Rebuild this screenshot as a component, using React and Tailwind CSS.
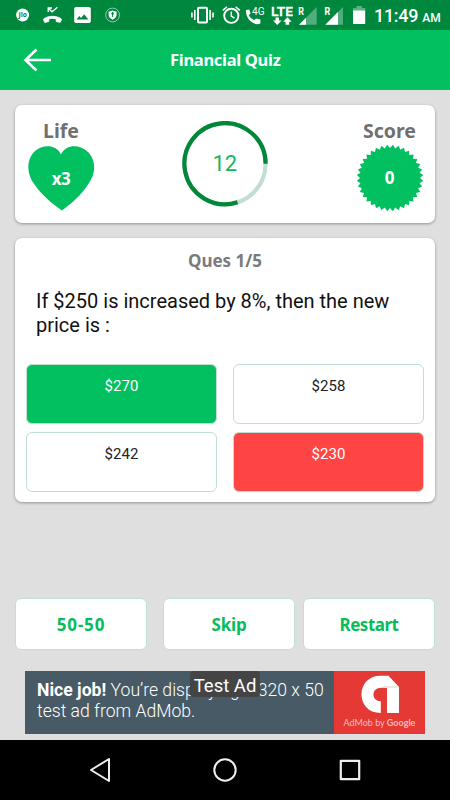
import React from 'react';

const HEADING = "font-['Noto_Sans','Open_Sans',sans-serif] font-bold";

const seal = Array.from({ length: 72 }, (_, i) => {
  const a = (i * Math.PI) / 36 - Math.PI / 2;
  const r = i % 2 ? 33.3 : 30;
  return `${(34 + r * Math.cos(a)).toFixed(2)},${(34 + r * Math.sin(a)).toFixed(2)}`;
}).join(' ');

function StatusBar() {
  return (
    <div className="flex h-[30px] items-start bg-[#00873e] text-white">
      <svg className="ml-4 h-[30px] w-[14px]" viewBox="16 0 14 30">
        <circle cx="22.6" cy="15" r="6.5" fill="white" />
        <text x="22.6" y="17.3" textAnchor="middle" fontSize="6.6" fontWeight="700" fill="#00873e" fontFamily="Open Sans, sans-serif">Jio</text>
      </svg>
      <svg className="ml-3 h-[30px] w-5" viewBox="42 0 20 30">
        <path d="M43.3 19.3C47.5 15.3 57.5 15.3 61.7 19.3L60.2 22.4L56.2 21.5V18.9C54 18.2 51 18.2 48.8 18.9V21.5L44.8 22.6Z" fill="white" stroke="white" strokeWidth=".8" strokeLinejoin="round" />
        <path d="M48.2 12V8H52M48.5 8.2L52 11.8L57.4 7.2" fill="none" stroke="white" strokeWidth="1.3" />
      </svg>
      <svg className="ml-3 h-[30px] w-[17px]" viewBox="74 0 17 30">
        <rect x="74.2" y="7" width="16.6" height="16" rx="1.8" fill="white" />
        <path d="M76.5 19.5L79.3 16L81.1 18L84.2 14.3L88.3 19.5Z" fill="#00873e" />
      </svg>
      <svg className="ml-3.5 h-[30px] w-4" viewBox="105 0 16 30">
        <circle cx="112.6" cy="15" r="6.9" fill="none" stroke="white" strokeWidth=".7" opacity=".8" />
        <path d="M108.6 11.8L112.6 10.4L116.6 11.8V15Q116.3 18 112.6 19.8Q108.9 18 108.6 15Z" fill="white" />
        <path d="M112.6 12V17" fill="none" stroke="#00873e" strokeWidth="1" />
        <circle cx="112.6" cy="13.5" r="1.2" fill="#00873e" />
      </svg>
      <svg className="ml-[69px] h-[30px] w-6" viewBox="190 0 24 30">
        <rect x="198" y="7.8" width="9" height="14.8" rx="1" fill="none" stroke="white" strokeWidth="2" />
        <path d="M194.8 10V20M210.1 10V20M191.9 12.5V17.5M213 12.5V17.5" stroke="white" strokeWidth="1.6" />
      </svg>
      <svg className="ml-2 h-[30px] w-[19px]" viewBox="222 0 19 30">
        <circle cx="231.3" cy="15.8" r="7.1" fill="none" stroke="white" strokeWidth="1.9" />
        <path d="M231.3 11.5V16L234.5 18.2M222.8 10.4L227 6.8M239.8 10.4L235.6 6.8" fill="none" stroke="white" strokeWidth="1.5" />
      </svg>
      <svg className="ml-1 h-[30px] w-5" viewBox="245 0 20 30">
        <path d="M246 10L249.3 9.5L250.5 13.4L248.8 15.2Q250.6 18.8 254.2 20.2L256 18.4L260.4 19.6V23.6Q255 25.5 250 20.8Q245.6 16 246 10Z" fill="white" />
        <text x="252" y="15" fontSize="10.5" textLength="12.5" lengthAdjust="spacingAndGlyphs" fill="white" fontFamily="Roboto, sans-serif">4G</text>
      </svg>
      <svg className="ml-1.5 h-[30px] w-[22px]" viewBox="271 0 22 30">
        <text x="271" y="15.8" fontSize="13.4" fontWeight="500" stroke="white" strokeWidth=".3" textLength="22" lengthAdjust="spacingAndGlyphs" fill="white" fontFamily="Roboto, sans-serif">LTE</text>
        <path d="M275.5 17.5H279V20.5H281.6L277.2 25L273 20.5H275.5ZM285.6 24.8H289.2V21.8H291.7L287.4 17.3L283.2 21.8H285.6Z" fill="white" />
      </svg>
      <svg className="ml-[5px] h-[30px] w-[19px]" viewBox="298 0 19 30">
        <text x="298.3" y="15" fontSize="10" fontWeight="700" textLength="5.7" lengthAdjust="spacingAndGlyphs" fill="white" fontFamily="Roboto, sans-serif">R</text>
        <path d="M316.7 7V24.7H299Z" fill="white" opacity=".32" />
        <path d="M306 17.7V24.7H299Z" fill="white" />
      </svg>
      <svg className="ml-[7px] h-[30px] w-5" viewBox="324 0 20 30">
        <text x="324.6" y="15" fontSize="10" fontWeight="700" textLength="5.7" lengthAdjust="spacingAndGlyphs" fill="white" fontFamily="Roboto, sans-serif">R</text>
        <path d="M343 7V24.7H325.3Z" fill="white" opacity=".32" />
        <path d="M338 12V24.7H325.3Z" fill="white" />
      </svg>
      <svg className="ml-[9px] h-[30px] w-[13px]" viewBox="353 0 13 30">
        <path d="M353 8H356.4V6H362V8H365.2V11H353Z" fill="white" opacity=".35" />
        <path d="M353 10.5H365.2V24H353Z" fill="white" />
      </svg>
      <div className="ml-[8px] flex items-baseline whitespace-nowrap font-[Roboto,sans-serif] font-medium leading-[32px]">
        <span className="text-[18px] tracking-[-0.3px]">11:49</span>
        <span className="ml-1 text-[12px]">AM</span>
      </div>
    </div>
  );
}

function Option({ children, tone }) {
  return (
    <div className={`flex h-[60px] justify-center rounded-md border border-[#bfdfd2] pt-[11px] font-[Roboto,sans-serif] text-[15px] leading-5 tracking-[0.1px] ${tone}`}>
      {children}
    </div>
  );
}

function Action({ children, className }) {
  return (
    <button className={`flex h-[52px] w-[132px] items-center justify-center rounded-md border border-[#bfe0d2] bg-white pt-0.5 text-[17px] text-[#05bd5d] ${HEADING} ${className}`}>
      {children}
    </button>
  );
}

export default function App() {
  return (
    <div className="flex h-[800px] w-[450px] flex-col overflow-hidden bg-[#dfdfdf]">
      <StatusBar />
      <header className="flex h-[60px] items-center bg-[#02c060] text-white">
        <svg className="ml-[23px] h-6 w-7" viewBox="0 0 28 24" fill="none" stroke="white" strokeWidth="2.6">
          <path d="M28 12H3M13.5 1.5L2.5 12L13.5 22.5" />
        </svg>
        <h1 className={`ml-[119px] pt-px text-[16.5px] tracking-[-0.3px] ${HEADING}`}>Financial Quiz</h1>
      </header>

      <section className="mx-[15px] mt-[15px] flex h-[118px] justify-between rounded-[7px] bg-white shadow-[0_1px_3px_rgba(0,0,0,0.35)]">
        <div className="ml-3 flex w-[68px] flex-col items-center pt-[14px]">
          <span className={`text-[19.5px] leading-6 text-[#707070] ${HEADING}`}>Life</span>
          <div className="mt-[3px] grid h-[65px] w-[68px] place-items-center">
            <svg className="col-start-1 row-start-1 h-[65px] w-[67px]" viewBox="27.5 145.5 67 65">
              <path d="M60.4 154C56 143.5 42 143.5 34 151C26 159 25.5 173 34 184C41 194 50 202 61.5 210C73 201.5 81 194 87.5 184C96.5 172 95 159 87.5 151.5C79 143.5 65.5 143.5 60.4 154Z" fill="#02c060" />
            </svg>
            <span className={`col-start-1 row-start-1 text-[17px] leading-5 tracking-[-0.4px] text-white ${HEADING}`}>x3</span>
          </div>
        </div>
        <div className="mr-px mt-4 grid h-[86px] w-[86px] place-items-center">
          <svg className="col-start-1 row-start-1 h-[86px] w-[86px]" viewBox="0 0 86 86" fill="none" strokeWidth="4.2">
            <circle cx="43" cy="42.7" r="40.6" stroke="#c2ded4" />
            <path d="M83.6 42.7A40.6 40.6 0 1 0 55.5 81.3" stroke="#008738" />
          </svg>
          <span className="col-start-1 row-start-1 font-[Roboto,sans-serif] text-[22px] leading-6 text-[#16b65c]">12</span>
        </div>
        <div className="mr-[11.5px] flex w-[68px] flex-col items-center pt-[14px]">
          <span className={`text-[19.5px] leading-6 text-[#707070] ${HEADING}`}>Score</span>
          <div className="mt-[1px] grid h-[68px] w-[68px] place-items-center">
            <svg className="col-start-1 row-start-1 h-[68px] w-[68px]" viewBox="0 0 68 68">
              <polygon points={seal} fill="#02c060" />
            </svg>
            <span className={`col-start-1 row-start-1 text-[17px] leading-5 text-white ${HEADING}`}>0</span>
          </div>
        </div>
      </section>

      <section className="mx-[15px] mt-[15px] h-[264px] rounded-[7px] bg-white shadow-[0_1px_3px_rgba(0,0,0,0.35)]">
        <h2 className={`pt-[11px] text-center text-[17px] leading-6 text-[#7b7b7b] ${HEADING}`}>Ques 1/5</h2>
        <p className="ml-[21px] mt-[16px] h-12 whitespace-nowrap font-[Roboto,sans-serif] text-[20px] leading-6 text-[#111]">
          If $250 is increased by 8%, then the new<br />price is :
        </p>
        <div className="mx-[11px] mt-[27px] grid grid-cols-2 gap-x-4 gap-y-2">
          <Option tone="bg-[#02c060] text-white">$270</Option>
          <Option tone="bg-white text-[#222]">$258</Option>
          <Option tone="bg-white text-[#222]">$242</Option>
          <Option tone="bg-[#ff4444] text-white">$230</Option>
        </div>
      </section>

      <div className="mx-[15px] mt-24 flex">
        <Action className="tracking-[0.8px]">50-50</Action>
        <Action className="ml-4 tracking-[-0.2px]">Skip</Action>
        <Action className="ml-2 tracking-[-0.5px]">Restart</Action>
      </div>

      <div className="relative mx-[25px] mt-[21px] flex h-[63px] bg-[#475a65] font-[Roboto,sans-serif] text-white">
        <p className="w-[309px] whitespace-nowrap pl-3 pt-[9px] text-[17.6px] font-light leading-[21px]">
          <b className="font-bold">Nice job!</b> You’re displaying a 320 x 50<br />test ad from AdMob.
        </p>
        <div className="flex w-[91px] flex-col items-center bg-[#e53935]">
          <svg className="mt-1 h-[39px] w-[38px]" viewBox="0 0 38 39">
            <path d="M19 .8H27.5L38 12V38H26V16.5H20.5C10.5 16.5 10.5 25.5 19.8 26V38C7 38 .5 29 .5 19.5C.5 8 9 .8 19 .8Z" fill="white" />
            <path d="M20.5 12.8C9.5 13 10.5 25.5 19.8 26.2V26H26V12.8Z" fill="#e53935" />
            <path d="M26 12.8H38V12L36.8 11H22V12.8Z" fill="#e5e5e5" />
          </svg>
          <span className="mt-[3px] whitespace-nowrap font-[Lato,sans-serif] text-[9px] leading-3 text-[#f9bcb9]">AdMob by <span className="font-bold">Google</span></span>
        </div>
        <span className="absolute left-[165px] top-0 flex h-[26px] w-[70px] items-center justify-center whitespace-nowrap rounded-[4px] bg-[#444] pt-1 text-[18.5px] leading-[22px]">Test Ad</span>
      </div>

      <nav className="mt-auto flex h-[60px] items-center bg-black">
        <svg className="ml-[88px] h-6 w-6" viewBox="88 768 24 24" fill="none" stroke="#eee" strokeWidth="2" strokeLinejoin="round">
          <path d="M91 780L109 769V791Z" />
        </svg>
        <svg className="ml-[101px] h-6 w-6" viewBox="0 0 24 24" fill="none" stroke="#eee" strokeWidth="2">
          <circle cx="12" cy="12" r="10.7" />
        </svg>
        <svg className="ml-[101px] h-6 w-6" viewBox="0 0 24 24" fill="none" stroke="#eee" strokeWidth="2.2" strokeLinejoin="round">
          <rect x="2.8" y="2.8" width="18.4" height="18.4" />
        </svg>
      </nav>
    </div>
  );
}
